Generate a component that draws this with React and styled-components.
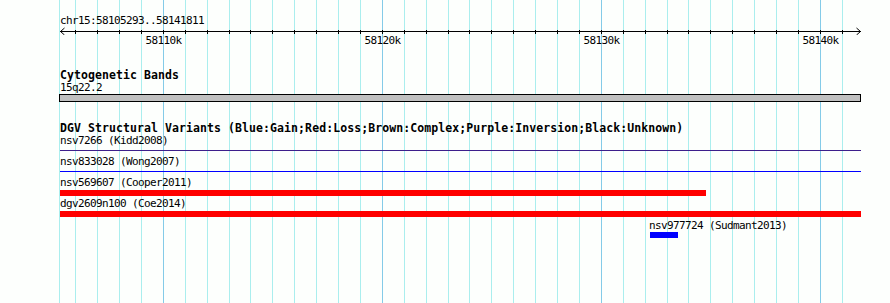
import React from 'react';
import styled, { createGlobalStyle } from 'styled-components';

// ruler scale: 10k majors at 163.3px, 21.9px per kb
const kbToX = (kb) => Math.floor(163.3 + (kb - 58110) * 21.9);
const kbs = [...Array(36).keys()].map(i => 58106 + i);

const MONO = '"DejaVu Sans Mono", "Liberation Mono", monospace';

const GlobalStyle = createGlobalStyle`
  html, body {
    margin: 0;
    padding: 0;
    background: #fdfffd;
  }
`

const Panel = styled.div`
  position: relative;
  width: 890px;
  height: 303px;
  overflow: hidden;
  background: #fdfffd;
  color: #000;
  font-family: ${MONO};
`

const GridLayer = styled.svg`
  position: absolute;
  top: 0;
  left: 0;
  z-index: 0;
`

const Content = styled.div`
  position: relative;
  z-index: 1;
  display: flex;
  flex-direction: column;
  align-items: flex-start;
`

const SmallText = styled.div`
  font-size: 11px;
  letter-spacing: -0.62px;
  line-height: 12px;
  height: 12px;
  white-space: pre;
  margin-top: ${({ gap }) => gap || 0}px;
  padding-left: ${({ x }) => (x === undefined ? 60 : x)}px;
`

const TrackTitle = styled.div`
  font-size: 11.5px;
  font-weight: bold;
  letter-spacing: 0.08px;
  line-height: 13px;
  height: 13px;
  white-space: pre;
  padding-left: 60px;
  margin-top: ${({ gap }) => gap}px;
`

const Axis = styled.svg`
  display: block;
`

const TickRow = styled.div`
  position: relative;
  width: 890px;
  height: 12px;
`

const TickLabel = styled.span`
  position: absolute;
  top: 0;
  transform: translateX(-50%);
  font-size: 11px;
  letter-spacing: -0.62px;
  line-height: 12px;
  white-space: pre;
`

const BandBar = styled.div`
  box-sizing: border-box;
  margin-left: 59px;
  width: 802px;
  height: 8px;
  border: 1px solid #000;
  background: #c0c0c0;
`

const Glyph = styled.div`
  flex: none;
  height: ${({ thick }) => thick}px;
  margin-top: ${({ gap }) => gap}px;
  background: ${({ color }) => color};
`

const features = [
  { label: 'nsv7266 (Kidd2008)', x0: 60, x1: 861, color: '#3d1f8c', thick: 1, gapLabel: 0, gapGlyph: 3 },
  { label: 'nsv833028 (Wong2007)', x0: 60, x1: 861, color: '#0000ff', thick: 1, gapLabel: 5, gapGlyph: 3 },
  { label: 'nsv569607 (Cooper2011)', x0: 60, x1: 706, color: '#ff0000', thick: 6, gapLabel: 5, gapGlyph: 1 },
  { label: 'dgv2609n100 (Coe2014)', x0: 60, x1: 861, color: '#ff0000', thick: 6, gapLabel: 2, gapGlyph: 1 },
  { label: 'nsv977724 (Sudmant2013)', x0: 650, x1: 678, color: '#0000ff', thick: 6, gapLabel: 3, gapGlyph: 0 },
]

const Grid = () => (
  <GridLayer width="890" height="303">
    <rect x="59" y="0" width="1" height="303" fill="#aaeeee" />
    {kbs.map(kb => (
      <rect key={kb} x={kbToX(kb)} y="0" width="1" height="303"
        fill={kb % 10 === 0 ? '#84cbe8' : '#aaeeee'} />
    ))}
  </GridLayer>
)

const Ruler = () => (
  <>
    <SmallText gap={15}>chr15:58105293..58141811</SmallText>
    <Axis width="890" height="8">
      <rect x="60" y="4" width="801" height="1" fill="#000" />
      <path d="M64.5 1 L60.5 4.5 L64.5 8 M856.5 1 L860.5 4.5 L856.5 8" stroke="#000" strokeWidth="1" fill="none" />
      {kbs.map(kb => (
        <rect key={kb} x={kbToX(kb)} y="3" width="1" height="4" fill="#000" />
      ))}
    </Axis>
    <TickRow>
      {kbs.filter(kb => kb % 10 === 0).map(kb => (
        <TickLabel key={kb} style={{ left: kbToX(kb) + 0.5 }}>{kb}k</TickLabel>
      ))}
    </TickRow>
  </>
)

const Feature = ({ f }) => (
  <>
    <SmallText gap={f.gapLabel} x={f.x0 === 60 ? 60 : f.x0 - 1}>{f.label}</SmallText>
    <Glyph gap={f.gapGlyph} thick={f.thick} color={f.color}
      style={{ marginLeft: f.x0, width: f.x1 - f.x0 }} />
  </>
)

const App = () => {
  return (
    <Panel>
      <GlobalStyle />
      <Grid />
      <Content>
        <Ruler />
        <TrackTitle gap={22}>Cytogenetic Bands</TrackTitle>
        <SmallText>15q22.2</SmallText>
        <BandBar />
        <TrackTitle gap={20}>DGV Structural Variants (Blue:Gain;Red:Loss;Brown:Complex;Purple:Inversion;Black:Unknown)</TrackTitle>
        {features.map(f => <Feature key={f.label} f={f} />)}
      </Content>
    </Panel>
  )
}

export default App;
